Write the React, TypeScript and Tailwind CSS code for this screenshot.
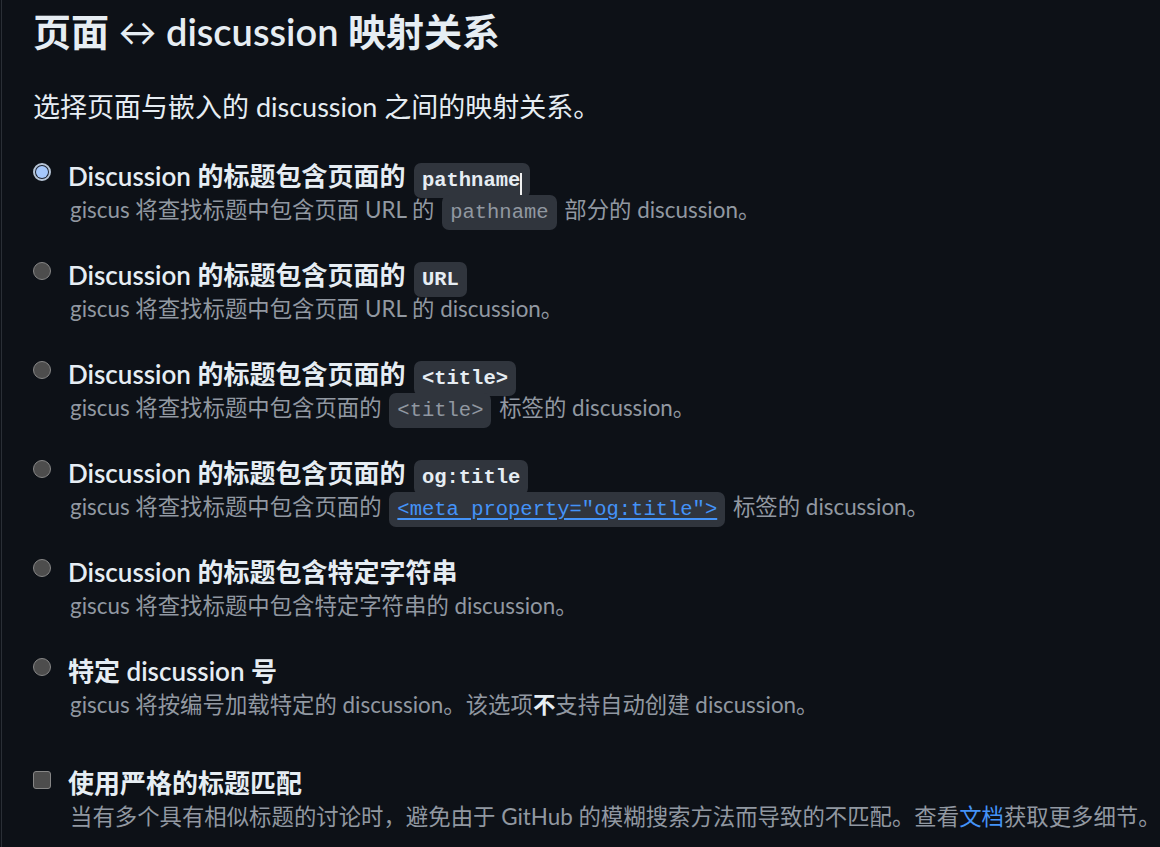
import React from "react";

const sans = "font-['Lato','Noto_Sans_CJK_SC',sans-serif]";
const mono = "font-['Liberation_Mono','DejaVu_Sans_Mono',monospace]";

function LabelCode({ children, caret }: { children: React.ReactNode; caret?: boolean }) {
  return (
    <code
      className={`${mono} font-bold text-[20.5px] leading-none text-[#e6edf3] bg-[#30353d] rounded-[7px] px-[8px] py-[6px] mx-[2px]`}
    >
      {children}
      {caret && <span className="inline-block w-[1.5px] h-[25px] -my-[6px] bg-[#f0f0f0] align-[-6px]" />}
    </code>
  );
}

function SubCode({ children, link }: { children: React.ReactNode; link?: boolean }) {
  return (
    <code
      className={`${mono} text-[20.5px] leading-none bg-[#30353d] rounded-[7px] px-[8px] py-[6px] mx-[2px] ${
        link ? "text-[#4493f8] underline underline-offset-[3px]" : "text-[#9198a1]"
      }`}
    >
      {children}
    </code>
  );
}

function Radio({ checked }: { checked?: boolean }) {
  if (checked) {
    return (
      <div className="mt-[3px] w-[18px] h-[18px] shrink-0 rounded-full border-[2px] border-[#b7c5d6] p-[1px] bg-[#1b2230]">
        <div className="w-full h-full rounded-full bg-[#a6c8fb]" />
      </div>
    );
  }
  return <div className="mt-[3px] w-[18px] h-[18px] shrink-0 rounded-full border-[1.5px] border-[#868686] bg-[#4d4d4d]" />;
}

function Option({
  checked,
  label,
  sub,
}: {
  checked?: boolean;
  label: React.ReactNode;
  sub: React.ReactNode;
}) {
  return (
    <div className="flex items-start gap-[17px]">
      <Radio checked={checked} />
      <div>
        <div className="text-[26px] leading-[33px] font-semibold text-[#e6edf3] whitespace-nowrap">{label}</div>
        <div className="text-[22.4px] leading-[33px] text-[#9198a1] whitespace-nowrap pl-[2px]">{sub}</div>
      </div>
    </div>
  );
}

export default function App() {
  return (
    <div className={`${sans} min-h-[847px] w-[1160px] bg-[#0d1117] overflow-hidden`}>
      <div className="ml-[1px] min-h-[847px] border-l border-[#2a2f36] pl-[31px] pt-[7px]">
        <h2 className="text-[38px] leading-[48px] font-semibold text-[#e6edf3] whitespace-nowrap">
          页面 <span className="font-normal">↔</span> discussion 映射关系
        </h2>
        <p className="mt-[36px] text-[27px] leading-[32px] text-[#e6edf3] whitespace-nowrap">
          选择页面与嵌入的 discussion 之间的映射关系。
        </p>
        <div className="mt-[37px] flex flex-col gap-[33px]">
          <Option
            checked
            label={
              <>
                Discussion 的标题包含页面的 <LabelCode caret>pathname</LabelCode>
              </>
            }
            sub={
              <>
                giscus 将查找标题中包含页面 URL 的 <SubCode>pathname</SubCode> 部分的 discussion。
              </>
            }
          />
          <Option
            label={
              <>
                Discussion 的标题包含页面的 <LabelCode>URL</LabelCode>
              </>
            }
            sub={<>giscus 将查找标题中包含页面 URL 的 discussion。</>}
          />
          <Option
            label={
              <>
                Discussion 的标题包含页面的 <LabelCode>{"<title>"}</LabelCode>
              </>
            }
            sub={
              <>
                giscus 将查找标题中包含页面的 <SubCode>{"<title>"}</SubCode> 标签的 discussion。
              </>
            }
          />
          <Option
            label={
              <>
                Discussion 的标题包含页面的 <LabelCode>og:title</LabelCode>
              </>
            }
            sub={
              <>
                giscus 将查找标题中包含页面的 <SubCode link>{'<meta property="og:title">'}</SubCode> 标签的 discussion。
              </>
            }
          />
          <Option
            label={<>Discussion 的标题包含特定字符串</>}
            sub={<>giscus 将查找标题中包含特定字符串的 discussion。</>}
          />
          <Option
            label={<>特定 discussion 号</>}
            sub={
              <>
                giscus 将按编号加载特定的 discussion。该选项<strong className="font-bold text-[#e6edf3]">不</strong>支持自动创建 discussion。
              </>
            }
          />
        </div>
        <div className="mt-[46px] flex items-start gap-[17px]">
          <div className="mt-[4px] w-[18px] h-[18px] shrink-0 rounded-[3px] border-[1.5px] border-[#868686] bg-[#4d4d4d]" />
          <div>
            <div className="text-[26px] leading-[33px] font-semibold text-[#e6edf3] whitespace-nowrap">使用严格的标题匹配</div>
            <div className="text-[22.4px] leading-[33px] text-[#9198a1] whitespace-nowrap pl-[2px]">
              当有多个具有相似标题的讨论时，避免由于 GitHub 的模糊搜索方法而导致的不匹配。查看
              <span className="text-[#4493f8]">文档</span>获取更多细节。
            </div>
          </div>
        </div>
      </div>
    </div>
  );
}
